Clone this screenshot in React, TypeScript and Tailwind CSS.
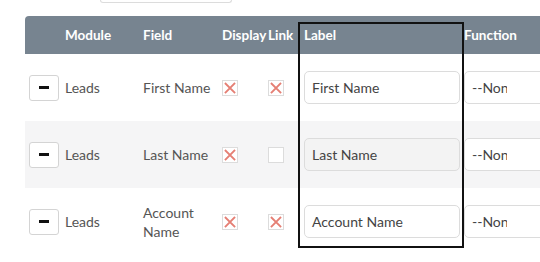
import React from 'react'

type Row = { module: string; field: string; display: boolean; link: boolean; label: string }

const rows: Row[] = [
  { module: 'Leads', field: 'First Name', display: true, link: true, label: 'First Name' },
  { module: 'Leads', field: 'Last Name', display: true, link: false, label: 'Last Name' },
  { module: 'Leads', field: 'Account Name', display: true, link: true, label: 'Account Name' },
]

const cols = 'grid grid-cols-[40px_78px_79px_46px_32px_160px_1fr]'

function Check({ on }: { on: boolean }) {
  return (
    <div className="w-4 h-4 border border-[#dcdcdc] bg-white flex items-center justify-center">
      {on && (
        <svg viewBox="0 0 16 16" className="w-[14px] h-[14px]">
          <path d="M3 3L13 13M13 3L3 13" stroke="#e57f74" strokeWidth="2.2" strokeLinecap="square" />
        </svg>
      )}
    </div>
  )
}

export default function App() {
  return (
    <div className="relative w-[540px] h-[262px] overflow-hidden bg-white text-[14px] text-[#555]" style={{ fontFamily: 'Lato, "Open Sans", sans-serif' }}>
      {/* bottom edge of search input above */}
      <div className="ml-[100px] w-[132px] h-[3px] border-x border-b border-[#dcdcdc] rounded-b-[5px]" />

      <div className="ml-[25px] mt-[13px]">
        <div className={`${cols} h-[38px] items-center bg-[#778490] rounded-tl-[4px] text-white font-bold text-[13.5px]`}>
          <div />
          <div>Module</div>
          <div>Field</div>
          <div>Display</div>
          <div>Link</div>
          <div className="pl-[4px]">Label</div>
          <div className="pl-[4px]">Function</div>
        </div>

        {rows.map((r, i) => (
          <div key={i} className={`${cols} h-[67px] items-center ${i === 1 ? 'bg-[#f5f5f6]' : 'bg-white'}`}>
            <div className="pl-[4px]">
              <button className="w-[30px] h-[26px] border border-[#d4d4d4] rounded-[3px] bg-white flex items-center justify-center">
                <span className="block w-[10px] h-[3px] bg-[#111]" />
              </button>
            </div>
            <div>{r.module}</div>
            <div className="leading-[19px]">{r.field}</div>
            <div><Check on={r.display} /></div>
            <div><Check on={r.link} /></div>
            <div className="pl-[4px]">
              <div className={`w-[156px] h-[33px] border border-[#dcdcdc] rounded-[5px] flex items-center px-[7px] text-[#444] ${i === 1 ? 'bg-[#f3f3f3]' : 'bg-white'}`}>
                {r.label}
              </div>
            </div>
            <div className="pl-[4px]">
              <div className="w-[90px] h-[33px] border border-[#dcdcdc] rounded-[5px] bg-white flex items-center pl-[7px] text-[#444]">
                <span className="block w-[35px] overflow-hidden whitespace-nowrap">--None--</span>
              </div>
            </div>
          </div>
        ))}
      </div>

      {/* highlight box */}
      <div className="absolute left-[298px] top-[22px] w-[166px] h-[226px] border-2 border-[#111]" />
    </div>
  )
}
